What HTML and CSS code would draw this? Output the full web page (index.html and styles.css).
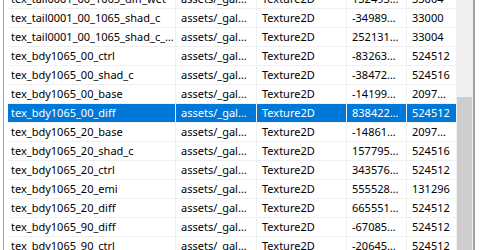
FILE: index.html
```html
<!DOCTYPE html>
<html>
<head>
  <title>Assets</title>
  <link rel="stylesheet" href="styles.css">
</head>
<body>

  <div class="frame">
    <div class="view">
      <div class="rows">
        <div class="row"><div>tex_tail0001_00_1065_diff_wet</div><div>assets/_gal…</div><div>Texture2D</div><div>132493…</div><div>33004</div></div>
        <div class="row"><div>tex_tail0001_00_1065_shad_c</div><div>assets/_gal…</div><div>Texture2D</div><div>-34989…</div><div>33000</div></div>
        <div class="row"><div>tex_tail0001_00_1065_shad_c_…</div><div>assets/_gal…</div><div>Texture2D</div><div>252131…</div><div>33004</div></div>
        <div class="row"><div>tex_bdy1065_00_ctrl</div><div>assets/_gal…</div><div>Texture2D</div><div>-83263…</div><div>524512</div></div>
        <div class="row"><div>tex_bdy1065_00_shad_c</div><div>assets/_gal…</div><div>Texture2D</div><div>-38472…</div><div>524516</div></div>
        <div class="row"><div>tex_bdy1065_00_base</div><div>assets/_gal…</div><div>Texture2D</div><div>-14199…</div><div>2097…</div></div>
        <div class="row selected"><div>tex_bdy1065_00_diff</div><div>assets/_gal…</div><div>Texture2D</div><div>838422…</div><div>524512</div></div>
        <div class="row"><div>tex_bdy1065_20_base</div><div>assets/_gal…</div><div>Texture2D</div><div>-14861…</div><div>2097…</div></div>
        <div class="row"><div>tex_bdy1065_20_shad_c</div><div>assets/_gal…</div><div>Texture2D</div><div>157795…</div><div>524516</div></div>
        <div class="row"><div>tex_bdy1065_20_ctrl</div><div>assets/_gal…</div><div>Texture2D</div><div>343576…</div><div>524512</div></div>
        <div class="row"><div>tex_bdy1065_20_emi</div><div>assets/_gal…</div><div>Texture2D</div><div>555528…</div><div>131296</div></div>
        <div class="row"><div>tex_bdy1065_20_diff</div><div>assets/_gal…</div><div>Texture2D</div><div>665551…</div><div>524512</div></div>
        <div class="row"><div>tex_bdy1065_90_diff</div><div>assets/_gal…</div><div>Texture2D</div><div>-67085…</div><div>524512</div></div>
        <div class="row"><div>tex_bdy1065_90_ctrl</div><div>assets/_gal…</div><div>Texture2D</div><div>-20645…</div><div>524512</div></div>
      </div>
    </div>
    <div class="scrollbar">
      <div class="thumb"></div>
    </div>
  </div>

</body>
</html>
```

FILE: styles.css
```css
body {
  margin: 0;
  background: white;
  font-family: "Noto Sans", sans-serif;
  font-size: 11px;
  color: black;
  overflow: hidden;
}

.frame {
  display: flex;
  height: 250px;
  margin-left: 3px;
  width: 472px;
  box-sizing: border-box;
  border-left: 1px solid #a0a0a0;
  border-right: 2px solid #a0a0a0;
}

.view {
  flex: 1;
  overflow: hidden;
  padding-left: 4px;
}

/* list is scrolled a bit, first row only half shown */
.rows {
  margin-top: -10px;
}

.row {
  display: grid;
  grid-template-columns: 168px 81px 90px 60px 49px;
  height: 19px;
  box-sizing: border-box;
  border-bottom: 1px solid #f0f0f0;
}

.row div {
  line-height: 18px;
  padding-left: 5px;
  white-space: nowrap;
  overflow: hidden;
  border-right: 1px solid #f0f0f0;
}

.row div:first-child {
  padding-left: 3px;
}

.row div:last-child {
  border-right: none;
}

.row.selected {
  background: #0078d7;
  color: white;
}

.scrollbar {
  width: 17px;
  background: #f0f0f0;
  display: flex;
  flex-direction: column;
  padding: 97px 1px 0 1px;
  box-sizing: border-box;
}

.thumb {
  flex: 1;
  background: #cdcdcd;
}
```
